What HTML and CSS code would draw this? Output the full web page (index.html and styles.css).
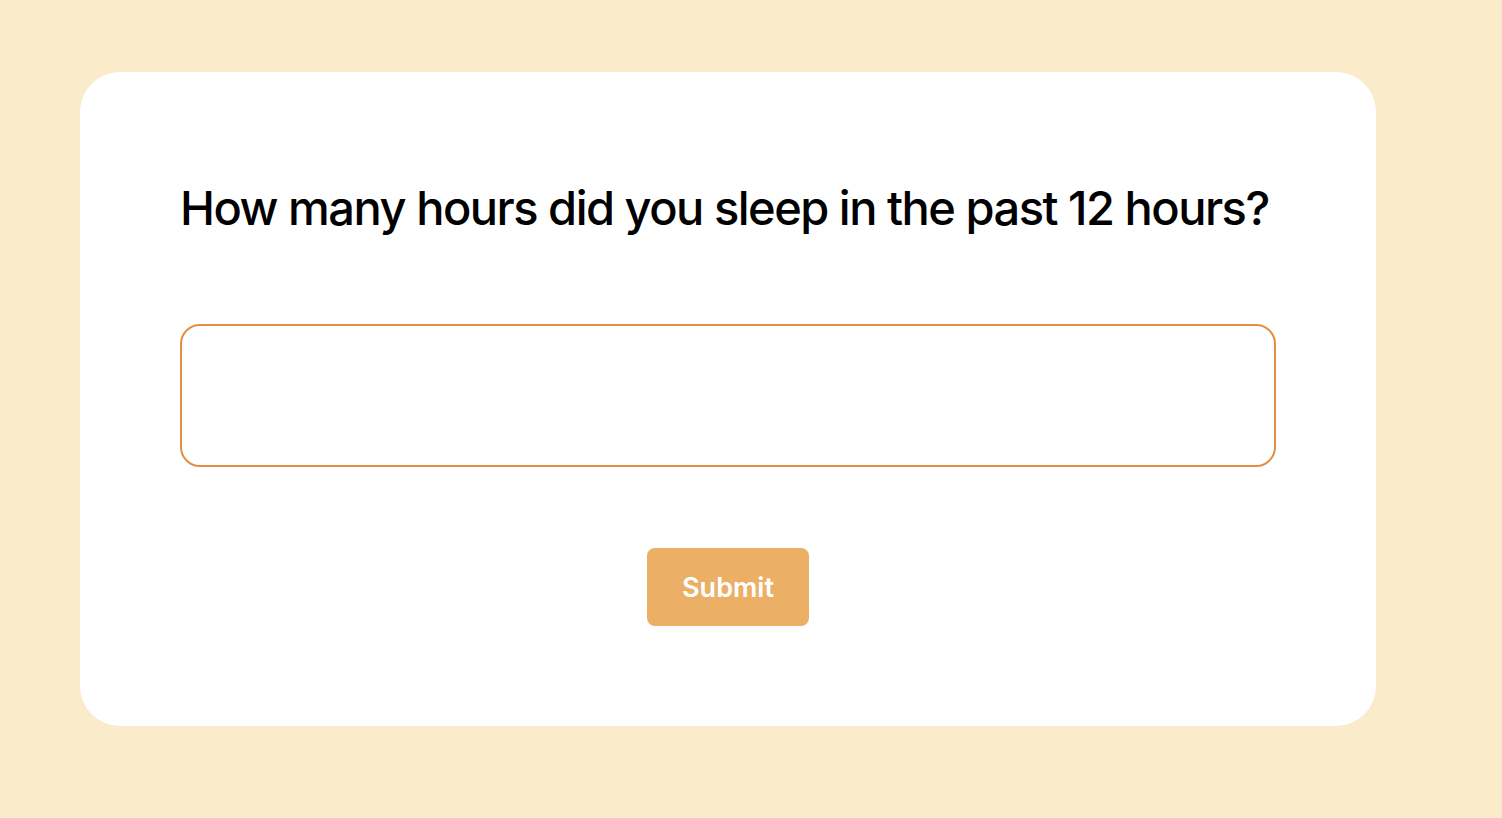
FILE: index.html
```html
<!DOCTYPE html>
<html>
<head>
<meta charset="utf-8">
<link rel="stylesheet" href="styles.css">
</head>
<body>
<main class="page">
  <section class="card">
    <h1 class="question">How many hours did you sleep in the past 12 hours?</h1>
    <input class="answer" type="text" aria-label="Hours slept">
    <div class="actions">
      <button class="submit" type="button">Submit</button>
    </div>
  </section>
</main>
</body>
</html>
```
FILE: styles.css
```css
html, body {
  margin: 0;
  padding: 0;
  background: #faebcb;
  font-family: Inter, "Noto Sans", sans-serif;
}
.page {
  padding: 72px 0 0 80px;
  min-height: 818px;
  box-sizing: border-box;
}
.card {
  width: 1296px;
  box-sizing: border-box;
  background: #ffffff;
  border-radius: 40px;
  padding: 107px 100px 100px 100px;
  display: flex;
  flex-direction: column;
}
.question {
  margin: 0;
  font-size: 47px;
  font-weight: 500;
  line-height: 58px;
  color: #000;
  letter-spacing: -1.5px;
  white-space: nowrap;
}
.answer {
  margin-top: 87px;
  height: 143px;
  box-sizing: border-box;
  border: 2px solid #e0913f;
  border-radius: 20px;
  outline: none;
  background: #fff;
  font-family: inherit;
  font-size: 24px;
  padding: 0 20px;
}
.actions {
  display: flex;
  justify-content: center;
  margin-top: 81px;
}
.submit {
  width: 162px;
  height: 78px;
  border: none;
  border-radius: 8px;
  background: #ebb066;
  color: #fff;
  font-family: inherit;
  font-size: 27px;
  font-weight: 600;
  cursor: pointer;
}
```
